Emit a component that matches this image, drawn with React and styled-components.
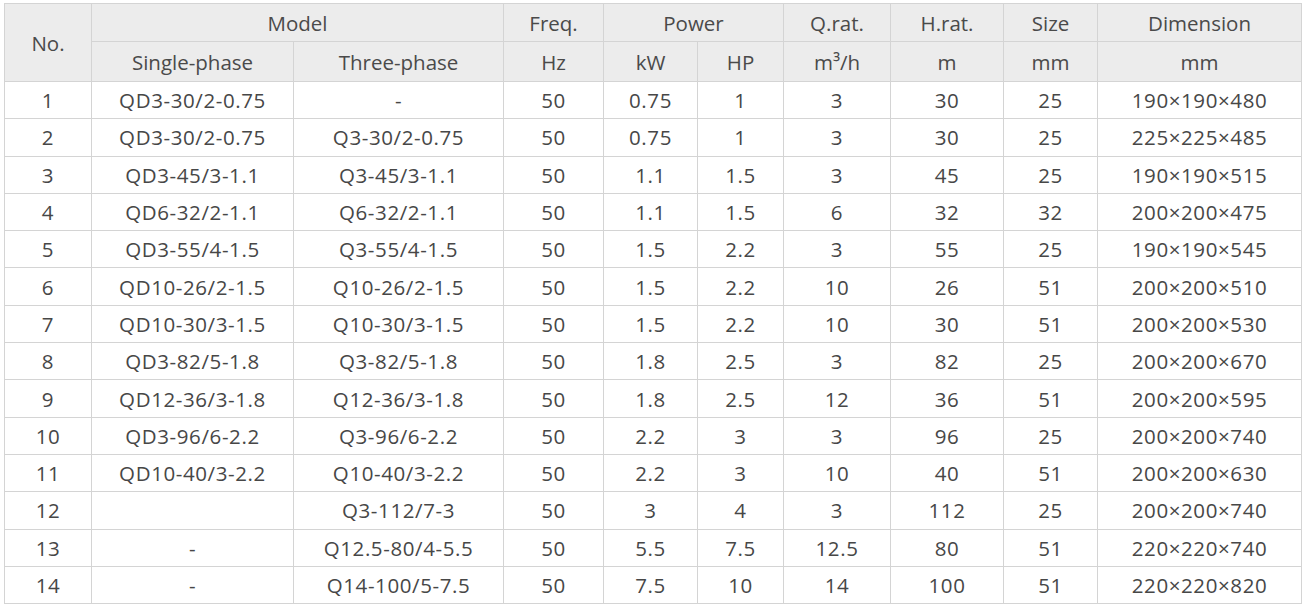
import React from 'react';
import styled, { createGlobalStyle } from 'styled-components';

const GlobalStyle = createGlobalStyle`
  html, body {
    margin: 0;
    padding: 0;
    background: #ffffff;
  }
  body {
    font-family: "Open Sans", "Noto Sans", sans-serif;
  }
`;

const Page = styled.div`
  padding: 3px 7px 0 4px;
`;

const Table = styled.table`
  width: 1297px;
  border-collapse: collapse;
  table-layout: fixed;
  border: 1px solid #d4d4d4;
  color: #474747;
  font-size: 20.5px;
  letter-spacing: 0.6px;
`;

const HeadCell = styled.th`
  background: #ececec;
  border: 1px solid #d4d4d4;
  font-weight: 400;
  color: #4a4a4a;
  text-align: center;
  padding: 0;
  letter-spacing: 0;
  height: ${p => p.$h || 37}px;
`;

const Row = styled.tr`
  height: 37.3px;
`;

const Cell = styled.td`
  border: 1px solid #d4d4d4;
  text-align: center;
  padding: 0;
  white-space: nowrap;
`;

const widths = [87, 202, 210, 100, 94, 86, 107, 113, 94, 204];

const rows = [
  [1, 'QD3-30/2-0.75', '-', 50, '0.75', 1, 3, 30, 25, '190×190×480'],
  [2, 'QD3-30/2-0.75', 'Q3-30/2-0.75', 50, '0.75', 1, 3, 30, 25, '225×225×485'],
  [3, 'QD3-45/3-1.1', 'Q3-45/3-1.1', 50, '1.1', '1.5', 3, 45, 25, '190×190×515'],
  [4, 'QD6-32/2-1.1', 'Q6-32/2-1.1', 50, '1.1', '1.5', 6, 32, 32, '200×200×475'],
  [5, 'QD3-55/4-1.5', 'Q3-55/4-1.5', 50, '1.5', '2.2', 3, 55, 25, '190×190×545'],
  [6, 'QD10-26/2-1.5', 'Q10-26/2-1.5', 50, '1.5', '2.2', 10, 26, 51, '200×200×510'],
  [7, 'QD10-30/3-1.5', 'Q10-30/3-1.5', 50, '1.5', '2.2', 10, 30, 51, '200×200×530'],
  [8, 'QD3-82/5-1.8', 'Q3-82/5-1.8', 50, '1.8', '2.5', 3, 82, 25, '200×200×670'],
  [9, 'QD12-36/3-1.8', 'Q12-36/3-1.8', 50, '1.8', '2.5', 12, 36, 51, '200×200×595'],
  [10, 'QD3-96/6-2.2', 'Q3-96/6-2.2', 50, '2.2', 3, 3, 96, 25, '200×200×740'],
  [11, 'QD10-40/3-2.2', 'Q10-40/3-2.2', 50, '2.2', 3, 10, 40, 51, '200×200×630'],
  [12, '', 'Q3-112/7-3', 50, 3, 4, 3, 112, 25, '200×200×740'],
  [13, '-', 'Q12.5-80/4-5.5', 50, '5.5', '7.5', '12.5', 80, 51, '220×220×740'],
  [14, '-', 'Q14-100/5-7.5', 50, '7.5', 10, 14, 100, 51, '220×220×820'],
];

export default function App() {
  return (
    <Page>
      <GlobalStyle />
      <Table>
        <colgroup>
          {widths.map((w, i) => (
            <col key={i} style={{ width: w }} />
          ))}
        </colgroup>
        <thead>
          <tr>
            <HeadCell rowSpan={2}>No.</HeadCell>
            <HeadCell colSpan={2}>Model</HeadCell>
            <HeadCell>Freq.</HeadCell>
            <HeadCell colSpan={2}>Power</HeadCell>
            <HeadCell>Q.rat.</HeadCell>
            <HeadCell>H.rat.</HeadCell>
            <HeadCell>Size</HeadCell>
            <HeadCell>Dimension</HeadCell>
          </tr>
          <tr>
            <HeadCell $h={39}>Single-phase</HeadCell>
            <HeadCell $h={39}>Three-phase</HeadCell>
            <HeadCell $h={39}>Hz</HeadCell>
            <HeadCell $h={39}>kW</HeadCell>
            <HeadCell $h={39}>HP</HeadCell>
            <HeadCell $h={39}>m³/h</HeadCell>
            <HeadCell $h={39}>m</HeadCell>
            <HeadCell $h={39}>mm</HeadCell>
            <HeadCell $h={39}>mm</HeadCell>
          </tr>
        </thead>
        <tbody>
          {rows.map(r => (
            <Row key={r[0]}>
              {r.map((v, i) => (
                <Cell key={i}>{v}</Cell>
              ))}
            </Row>
          ))}
        </tbody>
      </Table>
    </Page>
  );
}
